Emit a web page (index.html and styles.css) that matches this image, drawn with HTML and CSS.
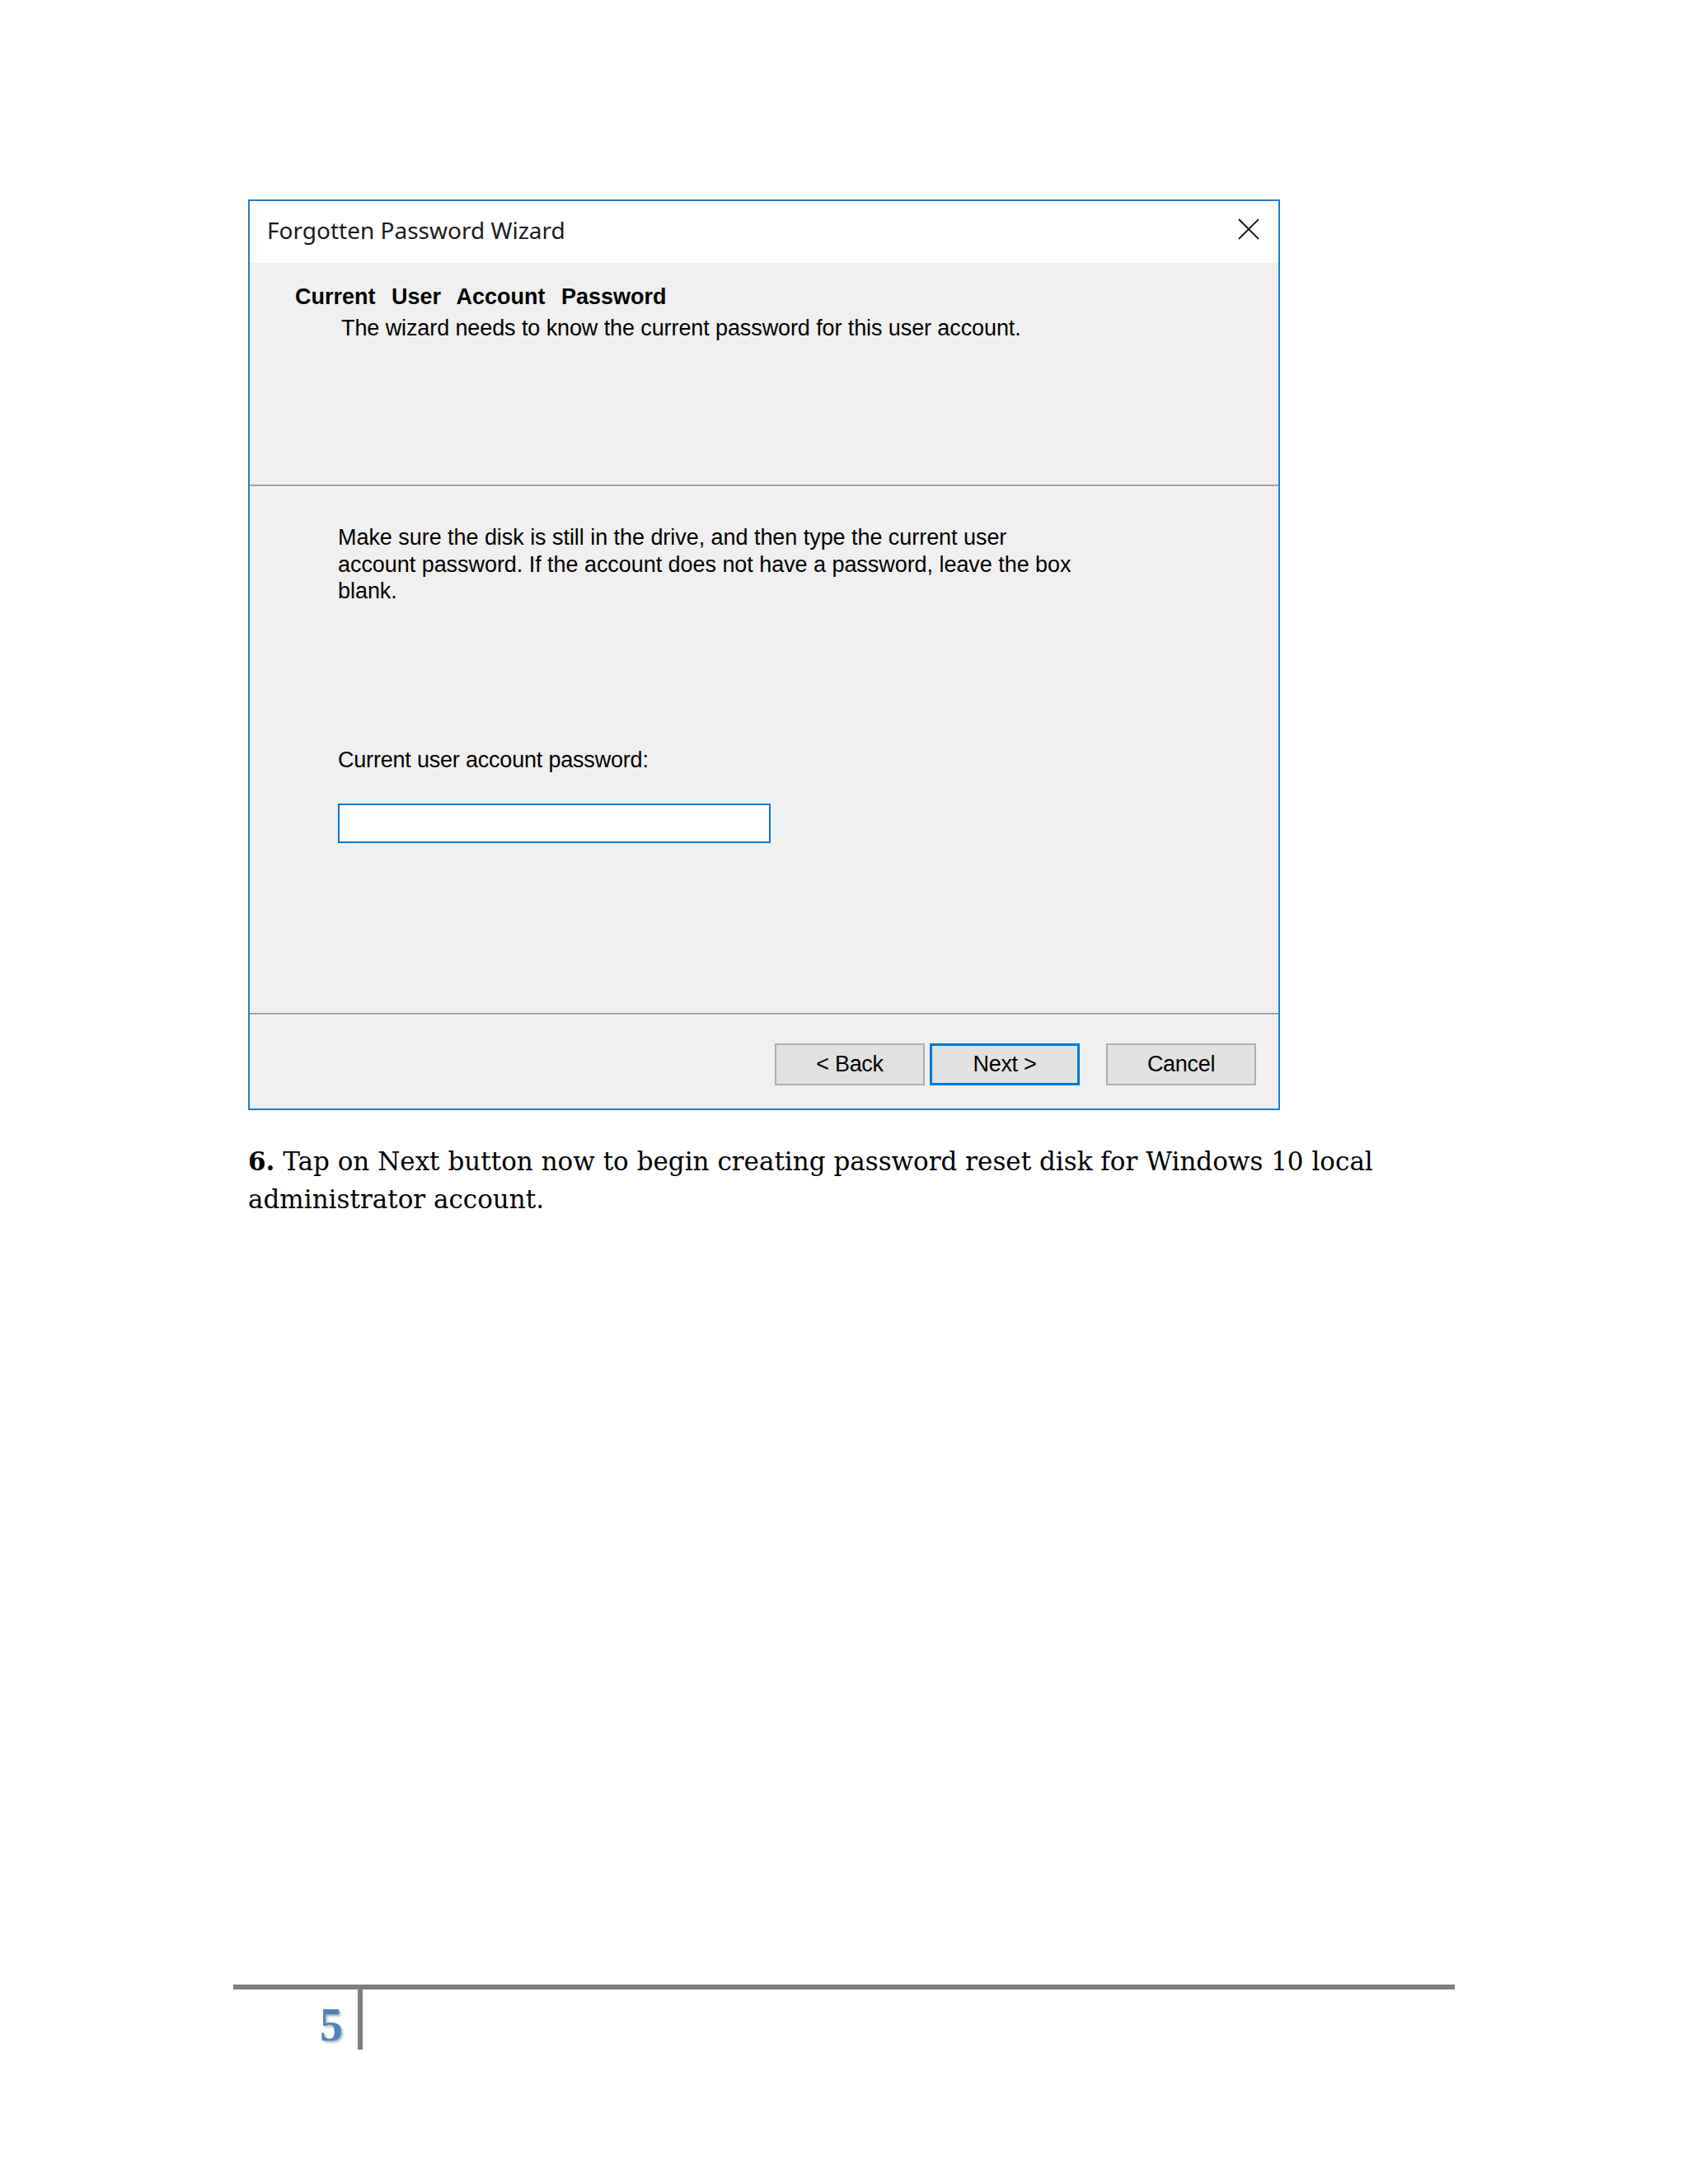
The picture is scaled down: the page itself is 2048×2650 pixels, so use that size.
FILE: index.html
```html
<!DOCTYPE html>
<html lang="en">
<head>
    <meta charset="UTF-8">
    <meta name="viewport" content="width=device-width, initial-scale=1.0">
    <title>Forgotten Password Wizard</title>
    <link rel="stylesheet" href="styles.css">
</head>
<body>
    <div class="page">
        <!-- wizard window -->
        <div class="dialog">
            <!-- title bar -->
            <div class="titlebar">
                <span class="window-title">Forgotten Password Wizard</span>
                <svg class="close-icon" width="26" height="26" viewBox="0 0 26 26">
                    <path d="M1 1 L25 25 M25 1 L1 25" stroke="#111" stroke-width="1.8" fill="none"/>
                </svg>
            </div>
            <!-- wizard header -->
            <div class="wizard-head">
                <div class="head-title">Current User Account Password</div>
                <div class="head-sub">The wizard needs to know the current password for this user account.</div>
            </div>
            <div class="divider"></div>
            <!-- body -->
            <div class="wizard-body">
                <p class="intro">Make sure the disk is still in the drive, and then type the current user<br>account password. If the account does not have a password, leave the box<br>blank.</p>
                <label class="field-label" for="pwd">Current user account password:</label>
                <input class="pwd-box" id="pwd" type="password">
            </div>
            <div class="divider"></div>
            <!-- buttons -->
            <div class="wizard-foot">
                <button class="btn">&lt; Back</button>
                <button class="btn btn-default">Next &gt;</button>
                <button class="btn btn-cancel">Cancel</button>
            </div>
        </div>

        <p class="step"><b>6.</b> Tap on Next button now to begin creating password reset disk for Windows 10 local administrator account.</p>
    </div>

    <!-- page footer -->
    <div class="footer">
        <div class="page-num">5</div>
        <div class="footer-rule"></div>
    </div>
</body>
</html>
```

FILE: styles.css
```css
/* page */
body {
    margin: 0;
    background: #ffffff;
    font-family: "Liberation Sans", Arial, sans-serif;
    color: #000000;
}

.page {
    padding-top: 242px;
    padding-left: 301px;
}

/* wizard window */
.dialog {
    width: 1252px;
    box-sizing: border-box;
    border: 2px solid #1c80d4;
    background: #f0f0f0;
}

.titlebar {
    height: 75px;
    box-sizing: border-box;
    display: flex;
    align-items: flex-start;
    padding: 16px 23px 0 21px;
    background: #ffffff;
}

.window-title {
    font-family: "Noto Sans", "Open Sans", sans-serif;
    font-size: 28px;
    line-height: 38px;
    color: #1a1a1a;
}

.close-icon {
    margin-left: auto;
    margin-top: 5px;
}

/* header area */
.wizard-head {
    height: 269px;
    box-sizing: border-box;
    padding: 25px 0 0 55px;
}

.head-title {
    font-size: 27px;
    line-height: 33px;
    font-weight: bold;
    word-spacing: 12px;
}

.head-sub {
    margin-top: 5px;
    margin-left: 56px;
    font-size: 27px;
    line-height: 33px;
    letter-spacing: -0.1px;
}

.divider {
    border-top: 2px solid #a0a0a0;
    border-bottom: 1px solid #ffffff;
}

/* body area */
.wizard-body {
    height: 638px;
    box-sizing: border-box;
    padding: 45px 0 0 107px;
}

.intro {
    margin: 0;
    font-size: 27px;
    line-height: 32.5px;
    letter-spacing: -0.05px;
}

.field-label {
    display: block;
    margin-top: 172px;
    font-size: 27px;
    line-height: 33px;
    letter-spacing: -0.2px;
}

.pwd-box {
    display: block;
    margin-top: 36px;
    width: 525px;
    height: 48px;
    box-sizing: border-box;
    border: 2px solid #0078d7;
    background: #ffffff;
    outline: none;
}

/* button row */
.wizard-foot {
    height: 113px;
    box-sizing: border-box;
    display: flex;
    justify-content: flex-end;
    align-items: flex-start;
    padding: 34px 27px 0 0;
}

.btn {
    width: 182px;
    height: 51px;
    box-sizing: border-box;
    border: 2px solid #adadad;
    background: #e1e1e1;
    font-family: "Liberation Sans", Arial, sans-serif;
    font-size: 27px;
    letter-spacing: -0.3px;
    color: #000000;
    padding: 0;
}

.btn-default {
    margin-left: 6px;
    border: 3px solid #0078d7;
}

.btn-cancel {
    margin-left: 32px;
}

/* text under the screenshot */
.step {
    margin: 39px 0 0 0;
    width: 1460px;
    font-family: "DejaVu Serif", "Liberation Serif", serif;
    font-size: 31px;
    line-height: 46px;
}

/* footer */
.footer {
    margin-top: 930px;
    margin-left: 283px;
    width: 1482px;
    border-top: 6px solid #7f7f7f;
    display: flex;
}

.page-num {
    width: 133px;
    padding: 15px 18px 0 0;
    text-align: right;
    font-family: "Liberation Serif", "Times New Roman", serif;
    font-size: 56px;
    line-height: 56px;
    font-weight: bold;
    color: #4f81bd;
    text-shadow: 2px 2px 3px rgba(0, 0, 0, 0.3);
}

.footer-rule {
    width: 0;
    height: 73px;
    border-left: 6px solid #7f7f7f;
}
```
